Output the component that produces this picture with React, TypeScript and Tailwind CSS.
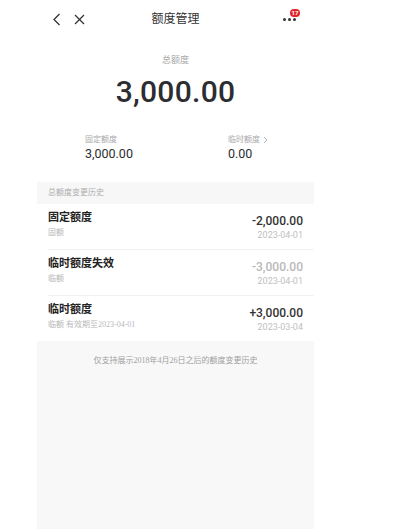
import React from "react";

const cjk = { fontFamily: 'Roboto, "Noto Sans CJK SC", "Noto Sans", sans-serif' };
const serif = { fontFamily: '"Liberation Serif", "Noto Sans CJK SC", serif' };

function Row({
  title,
  sub,
  amount,
  date,
  dim,
}: {
  title: string;
  sub: React.ReactNode;
  amount: string;
  date: string;
  dim?: boolean;
}) {
  return (
    <div className="flex h-[45px] items-start justify-between px-[11px] pt-[7px]">
      <div className="flex flex-col">
        <div className="text-[11px] font-semibold leading-[14px] text-[#222]">{title}</div>
        <div className="mt-[2px] text-[8px] leading-[12px] text-[#b8b8b8]">{sub}</div>
      </div>
      <div className="flex flex-col items-end pt-[3px]">
        <div
          className={
            dim
              ? "text-[12px] font-medium leading-[14px] text-[#b8b8b8]"
              : "text-[12px] font-medium leading-[14px] text-[#333]"
          }
        >
          {amount}
        </div>
        <div className="mt-[1px] text-[9px] leading-[12px] text-[#c0c0c0]">{date}</div>
      </div>
    </div>
  );
}

export default function App() {
  return (
    <div className="h-[529px] w-[400px] overflow-hidden bg-white" style={cjk}>
      <div className="ml-[37px] flex h-[529px] w-[277px] flex-col">
        {/* header */}
        <div className="relative flex h-[37px] items-center justify-center">
          <svg className="absolute left-[15px] top-[13px]" width="10" height="13" viewBox="0 0 10 13">
            <polyline points="7.5,1 2,6.5 7.5,12" fill="none" stroke="#333" strokeWidth="1.3" />
          </svg>
          <svg className="absolute left-[37px] top-[14px]" width="11" height="11" viewBox="0 0 11 11">
            <line x1="1" y1="1" x2="10" y2="10" stroke="#333" strokeWidth="1.3" />
            <line x1="10" y1="1" x2="1" y2="10" stroke="#333" strokeWidth="1.3" />
          </svg>
          <div className="text-[12px] leading-[14px] text-[#333]">额度管理</div>
          <div className="absolute left-[246px] top-[18px] flex gap-[2.5px]">
            <span className="h-[2.5px] w-[2.5px] rounded-full bg-[#333]" />
            <span className="h-[2.5px] w-[2.5px] rounded-full bg-[#333]" />
            <span className="h-[2.5px] w-[2.5px] rounded-full bg-[#333]" />
          </div>
          <div className="absolute left-[253px] top-[9px] flex h-[8px] min-w-[10px] items-center justify-center rounded-full bg-[#e0262b] px-[1.5px] text-[6px] font-bold leading-[8px] text-white">
            17
          </div>
        </div>

        {/* total */}
        <div className="mt-[17px] text-center text-[9px] leading-[12px] text-[#a8a8a8]">总额度</div>
        <div className="mt-[11px] text-center text-[30px] font-medium leading-[30px] tracking-[0.3px] text-[#2b2d31]">
          3,000.00
        </div>

        <div className="mt-[28px] flex pl-[48px]">
          <div className="w-[143px]">
            <div className="text-[8px] leading-[10px] text-[#aaa]">固定额度</div>
            <div className="mt-[2px] text-[12.5px] leading-[14px] text-[#2b2d31]">3,000.00</div>
          </div>
          <div>
            <div className="flex items-center gap-[3px] text-[8px] leading-[10px] text-[#aaa]">
              临时额度
              <svg width="5" height="8" viewBox="0 0 5 8">
                <polyline points="1,1 4,4 1,7" fill="none" stroke="#aaa" strokeWidth="0.9" />
              </svg>
            </div>
            <div className="mt-[2px] text-[12.5px] leading-[14px] text-[#2b2d31]">0.00</div>
          </div>
        </div>

        {/* history header */}
        <div className="mt-[21px] flex h-[22px] items-center bg-[#f7f7f7] px-[11px] text-[8px] text-[#adadad]">
          总额度变更历史
        </div>

        <Row title="固定额度" sub="固额" amount="-2,000.00" date="2023-04-01" />
        <div className="ml-[11px] h-px bg-[#f2f2f2]" />
        <Row title="临时额度失效" sub="临额" amount="-3,000.00" date="2023-04-01" dim />
        <div className="ml-[11px] h-px bg-[#f2f2f2]" />
        <Row
          title="临时额度"
          sub={
            <span>
              临额 有效期至<span style={serif}>2023-04-01</span>
            </span>
          }
          amount="+3,000.00"
          date="2023-03-04"
        />

        {/* footer */}
        <div className="flex-1 bg-[#f8f8f8] pt-[14px] text-center text-[8px] leading-[12px] text-[#a0a0a0]">
          仅支持展示<span style={serif}>2018</span>年<span style={serif}>4</span>月
          <span style={serif}>26</span>日之后的额度变更历史
        </div>
      </div>
    </div>
  );
}
